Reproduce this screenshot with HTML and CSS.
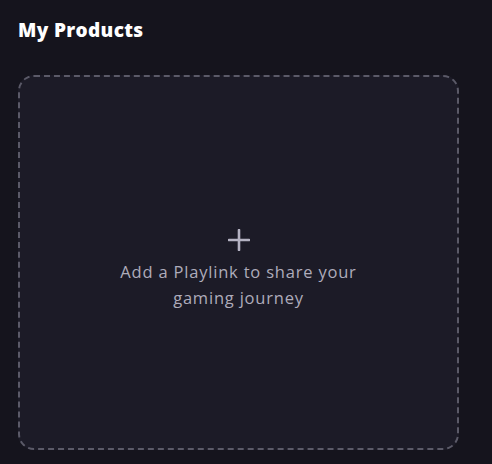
FILE: index.html
```html
<!DOCTYPE html>
<html lang="en">
<head>
    <meta charset="UTF-8">
    <meta name="viewport" content="width=device-width, initial-scale=1.0">
    <title>My Products</title>
    <link rel="stylesheet" href="styles.css">
</head>
<body>
    <div class="panel">
        <h2 class="panel-title">My Products</h2>

        <div class="add-card">
            <svg class="add-icon" width="22" height="22" viewBox="0 0 22 22">
                <path d="M11 1v20M1 11h20" stroke="currentColor" stroke-width="2.6" stroke-linecap="round" fill="none"/>
            </svg>
            <p class="add-text">Add a Playlink to share your gaming journey</p>
        </div>
    </div>
</body>
</html>
```

FILE: styles.css
```css
body {
    margin: 0;
    background-color: #15141d;
    font-family: "Open Sans", "Liberation Sans", sans-serif;
}

.panel {
    width: 476px;
    padding: 16px 0 14px 18px;
    box-sizing: border-box;
}

.panel-title {
    margin: 0 0 31px 0;
    color: #ffffff;
    font-size: 19px;
    font-weight: 800;
    line-height: 28px;
    letter-spacing: 0.35px;
}

.add-card {
    height: 375px;
    width: 441px;
    box-sizing: border-box;
    border: 2px dashed #5b5a68;
    border-radius: 16px;
    background-color: #1c1b27;
    display: flex;
    flex-direction: column;
    align-items: center;
    justify-content: center;
    padding-top: 14px;
}

.add-icon {
    color: #b4b2c2;
    margin-bottom: 8px;
}

.add-text {
    margin: 0;
    width: 280px;
    text-align: center;
    color: #aeacbb;
    font-size: 16.5px;
    font-weight: 500;
    line-height: 26px;
    letter-spacing: 0.8px;
}
```
